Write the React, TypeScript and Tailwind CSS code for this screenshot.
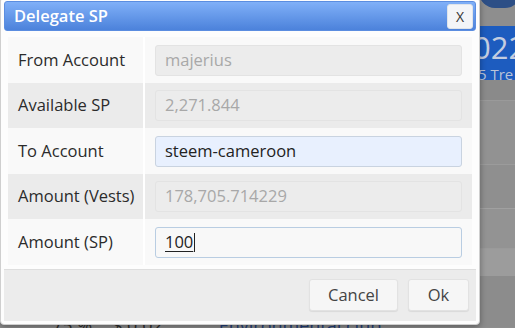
import React from "react";

const rows = [
  { label: "From Account", value: "majerius", kind: "disabled" },
  { label: "Available SP", value: "2,271.844", kind: "disabled" },
  { label: "To Account", value: "steem-cameroon", kind: "filled" },
  { label: "Amount (Vests)", value: "178,705.714229", kind: "disabled" },
  { label: "Amount (SP)", value: "100", kind: "focus" },
];

function Field({ value, kind }: { value: string; kind: string }) {
  if (kind === "disabled") {
    return (
      <div className="h-[31px] w-full rounded-[3px] border border-[#e3e3e3] bg-[#ececec] px-[9px] flex items-center text-[16.5px] text-[#a8a8a8]">
        {value}
      </div>
    );
  }
  if (kind === "filled") {
    return (
      <div className="h-[31px] w-full rounded-[3px] border border-[#c9d3e0] bg-[#e8f0fe] px-[9px] flex items-center text-[16.5px] text-[#222]">
        {value}
      </div>
    );
  }
  return (
    <div className="h-[31px] w-full rounded-[3px] border border-[#b9cde2] bg-[#f8f8f8] px-[9px] flex items-center text-[16.5px] text-[#222]">
      <span className="underline underline-offset-[3px] decoration-[#222]">{value}</span>
      <span className="ml-[1px] inline-block h-[19px] w-[1px] bg-[#222]" />
    </div>
  );
}

export default function App() {
  return (
    <div className="relative w-[515px] h-[328px] overflow-hidden bg-[#8e8e8e] font-['Open_Sans',sans-serif]">
      {/* page behind the modal overlay */}
      <div className="flex flex-col">
        <div className="h-[26px] flex justify-end">
          <div className="mr-[-6px] mt-[-24px] h-[32px] w-[42px] rounded-full bg-[#2d4f86]" />
        </div>
        <div className="h-[54px] bg-[#1d5cbf] flex flex-col pl-[473px] pt-[6px] overflow-hidden">
          <div className="text-[31px] leading-[30px] text-[#c3cde0] whitespace-nowrap">022</div>
          <div className="mt-[4px] text-[15px] leading-[16px] text-[#b9c4d8] whitespace-nowrap pl-[5px]">5 Tre</div>
        </div>
        <div className="h-[21px] bg-[#8a8a8a] border-b border-[#9a9a9a]" />
        <div className="h-[64px] bg-[#929292] border-b border-[#9b9b9b]" />
        <div className="h-[44px] bg-[#8f8f8f] border-b border-[#a0a0a0]" />
        <div className="h-[40px] bg-[#939393] border-b border-[#9a9a9a]" />
        <div className="h-[28px] bg-[#9c9c9c] border-b border-[#8c8c8c]" />
        <div className="h-[50px] bg-[#8c8c8c] flex items-start pt-[38px] text-[18px] leading-[20px] text-[#2e2e2e] whitespace-nowrap">
          <span className="ml-[52px]">75 %</span>
          <span className="ml-[20px]">$ 0.02</span>
          <span className="ml-[56px] text-[#223f7a]">Environmental club</span>
        </div>
      </div>

      {/* modal */}
      <div className="absolute left-0 top-[-3px] w-[480px] rounded-[4px] border border-[#cfcfcf] bg-[#fdfdfd] p-[3px] shadow-[0_2px_6px_rgba(0,0,0,0.35)]">
        <div className="h-[30px] rounded-[3px] border border-[#5b8de0] bg-gradient-to-b from-[#80b0f8] to-[#4c82db] flex items-center justify-between pl-[9px] pr-[2px]">
          <span className="text-[16.5px] font-semibold text-white leading-none">Delegate SP</span>
          <div className="mt-[1px] h-[25px] w-[26px] rounded-[3px] border border-[#dfe4ea] bg-[#f3f5f8] flex items-center justify-center text-[14px] text-[#333] leading-none">
            X
          </div>
        </div>
        <div className="px-[4px] pt-[6px] pb-[4px]">
          <div className="flex flex-col">
            {rows.map((r, i) => (
              <div
                key={r.label}
                className={`flex items-center ${i % 2 === 0 ? "h-[46px] bg-[#f9f9f9]" : "h-[45px] bg-[#ebebeb]"}`}
              >
                <div className="w-[137px] h-full flex items-center pl-[10px] text-[16.5px] text-[#2b2b2b] border-r-2 border-white">
                  {r.label}
                </div>
                <div className="flex-1 px-[10px]">
                  <Field value={r.value} kind={r.kind} />
                </div>
              </div>
            ))}
          </div>
        </div>
        <div className="h-[52px] border-t border-[#dedede] bg-[#ececec] flex items-start pt-[9px] justify-end gap-[10px] pr-[7px]">
          <div className="h-[32px] w-[89px] rounded-[3px] border border-[#e2e2e2] bg-[#f6f6f6] shadow-[0_1px_1px_rgba(0,0,0,0.08)] flex items-center justify-center text-[16.5px] text-[#444]">
            Cancel
          </div>
          <div className="h-[32px] w-[61px] rounded-[3px] border border-[#e2e2e2] bg-[#f6f6f6] shadow-[0_1px_1px_rgba(0,0,0,0.08)] flex items-center justify-center text-[16.5px] text-[#444]">
            Ok
          </div>
        </div>
      </div>
    </div>
  );
}
